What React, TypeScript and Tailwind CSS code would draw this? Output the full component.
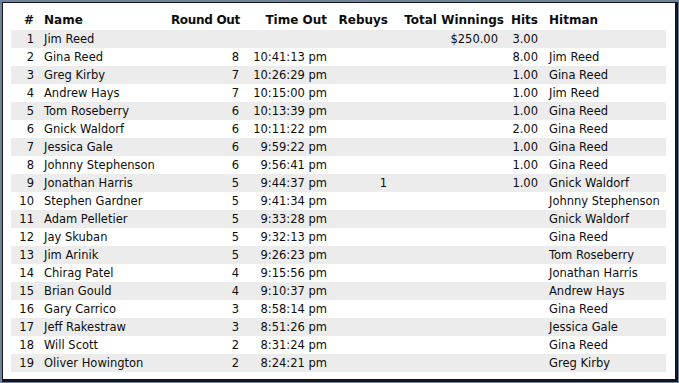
import React from "react";

type Row = [number, string, string, string, string, string, string, string];

const rows: Row[] = [
  [1, "Jim Reed", "", "", "", "$250.00", "3.00", ""],
  [2, "Gina Reed", "8", "10:41:13 pm", "", "", "8.00", "Jim Reed"],
  [3, "Greg Kirby", "7", "10:26:29 pm", "", "", "1.00", "Gina Reed"],
  [4, "Andrew Hays", "7", "10:15:00 pm", "", "", "1.00", "Jim Reed"],
  [5, "Tom Roseberry", "6", "10:13:39 pm", "", "", "1.00", "Gina Reed"],
  [6, "Gnick Waldorf", "6", "10:11:22 pm", "", "", "2.00", "Gina Reed"],
  [7, "Jessica Gale", "6", "9:59:22 pm", "", "", "1.00", "Gina Reed"],
  [8, "Johnny Stephenson", "6", "9:56:41 pm", "", "", "1.00", "Gina Reed"],
  [9, "Jonathan Harris", "5", "9:44:37 pm", "1", "", "1.00", "Gnick Waldorf"],
  [10, "Stephen Gardner", "5", "9:41:34 pm", "", "", "", "Johnny Stephenson"],
  [11, "Adam Pelletier", "5", "9:33:28 pm", "", "", "", "Gnick Waldorf"],
  [12, "Jay Skuban", "5", "9:32:13 pm", "", "", "", "Gina Reed"],
  [13, "Jim Arinik", "5", "9:26:23 pm", "", "", "", "Tom Roseberry"],
  [14, "Chirag Patel", "4", "9:15:56 pm", "", "", "", "Jonathan Harris"],
  [15, "Brian Gould", "4", "9:10:37 pm", "", "", "", "Andrew Hays"],
  [16, "Gary Carrico", "3", "8:58:14 pm", "", "", "", "Gina Reed"],
  [17, "Jeff Rakestraw", "3", "8:51:26 pm", "", "", "", "Jessica Gale"],
  [18, "Will Scott", "2", "8:31:24 pm", "", "", "", "Gina Reed"],
  [19, "Oliver Howington", "2", "8:24:21 pm", "", "", "", "Greg Kirby"],
];

export default function App() {
  return (
    <div className="w-[679px] h-[383px] bg-[#6e83a1] pt-[2px] pl-[2px] pr-[1px] pb-[1px]">
      <div
        className="h-full bg-white border-t border-l border-r-[3px] border-b-[3px] border-[#161616] pt-[8px] pl-[8px] text-[#0d0d0d] text-[11.5px]"
        style={{ fontFamily: '"DejaVu Sans", Verdana, sans-serif' }}
      >
        <table className="table-fixed border-collapse w-[655px]">
          <colgroup>
            <col className="w-[25px]" />
            <col className="w-[133px]" />
            <col className="w-[74px]" />
            <col className="w-[87px]" />
            <col className="w-[61px]" />
            <col className="w-[117px]" />
            <col className="w-[34px]" />
            <col className="w-[124px]" />
          </colgroup>
          <thead>
            <tr className="h-[19px] font-bold text-[12px]">
              <th className="text-right pr-[2px] font-bold leading-[19px]">#</th>
              <th className="text-left pl-[8px] font-bold leading-[19px]">Name</th>
              <th className="text-right pr-[3px] font-bold whitespace-nowrap tracking-[-0.3px] leading-[19px]">Round Out</th>
              <th className="text-right pr-[3px] font-bold whitespace-nowrap leading-[19px]">Time Out</th>
              <th className="text-right pr-[3px] font-bold leading-[19px]">Rebuys</th>
              <th className="text-right pr-[4px] font-bold whitespace-nowrap leading-[19px]">Total Winnings</th>
              <th className="text-right pr-[4px] font-bold leading-[19px]">Hits</th>
              <th className="text-left pl-[7px] font-bold leading-[19px]">Hitman</th>
            </tr>
          </thead>
          <tbody>
            {rows.map((r, i) => (
              <tr key={r[0]} className={"h-[18px] " + (i % 2 === 0 ? "bg-[#ececec]" : "bg-white")}>
                <td className="text-right pr-[2px] p-0 leading-[18px]">{r[0]}</td>
                <td className="text-left pl-[8px] whitespace-nowrap leading-[18px]">{r[1]}</td>
                <td className="text-right pr-[4px] leading-[18px]">{r[2]}</td>
                <td className="text-right pr-[3px] whitespace-nowrap leading-[18px]">{r[3]}</td>
                <td className="text-right pr-[4px] leading-[18px]">{r[4]}</td>
                <td className="text-right pr-[10px] leading-[18px]">{r[5]}</td>
                <td className="text-right pr-[4px] leading-[18px]">{r[6]}</td>
                <td className="text-left pl-[7px] whitespace-nowrap leading-[18px]">{r[7]}</td>
              </tr>
            ))}
          </tbody>
        </table>
      </div>
    </div>
  );
}
